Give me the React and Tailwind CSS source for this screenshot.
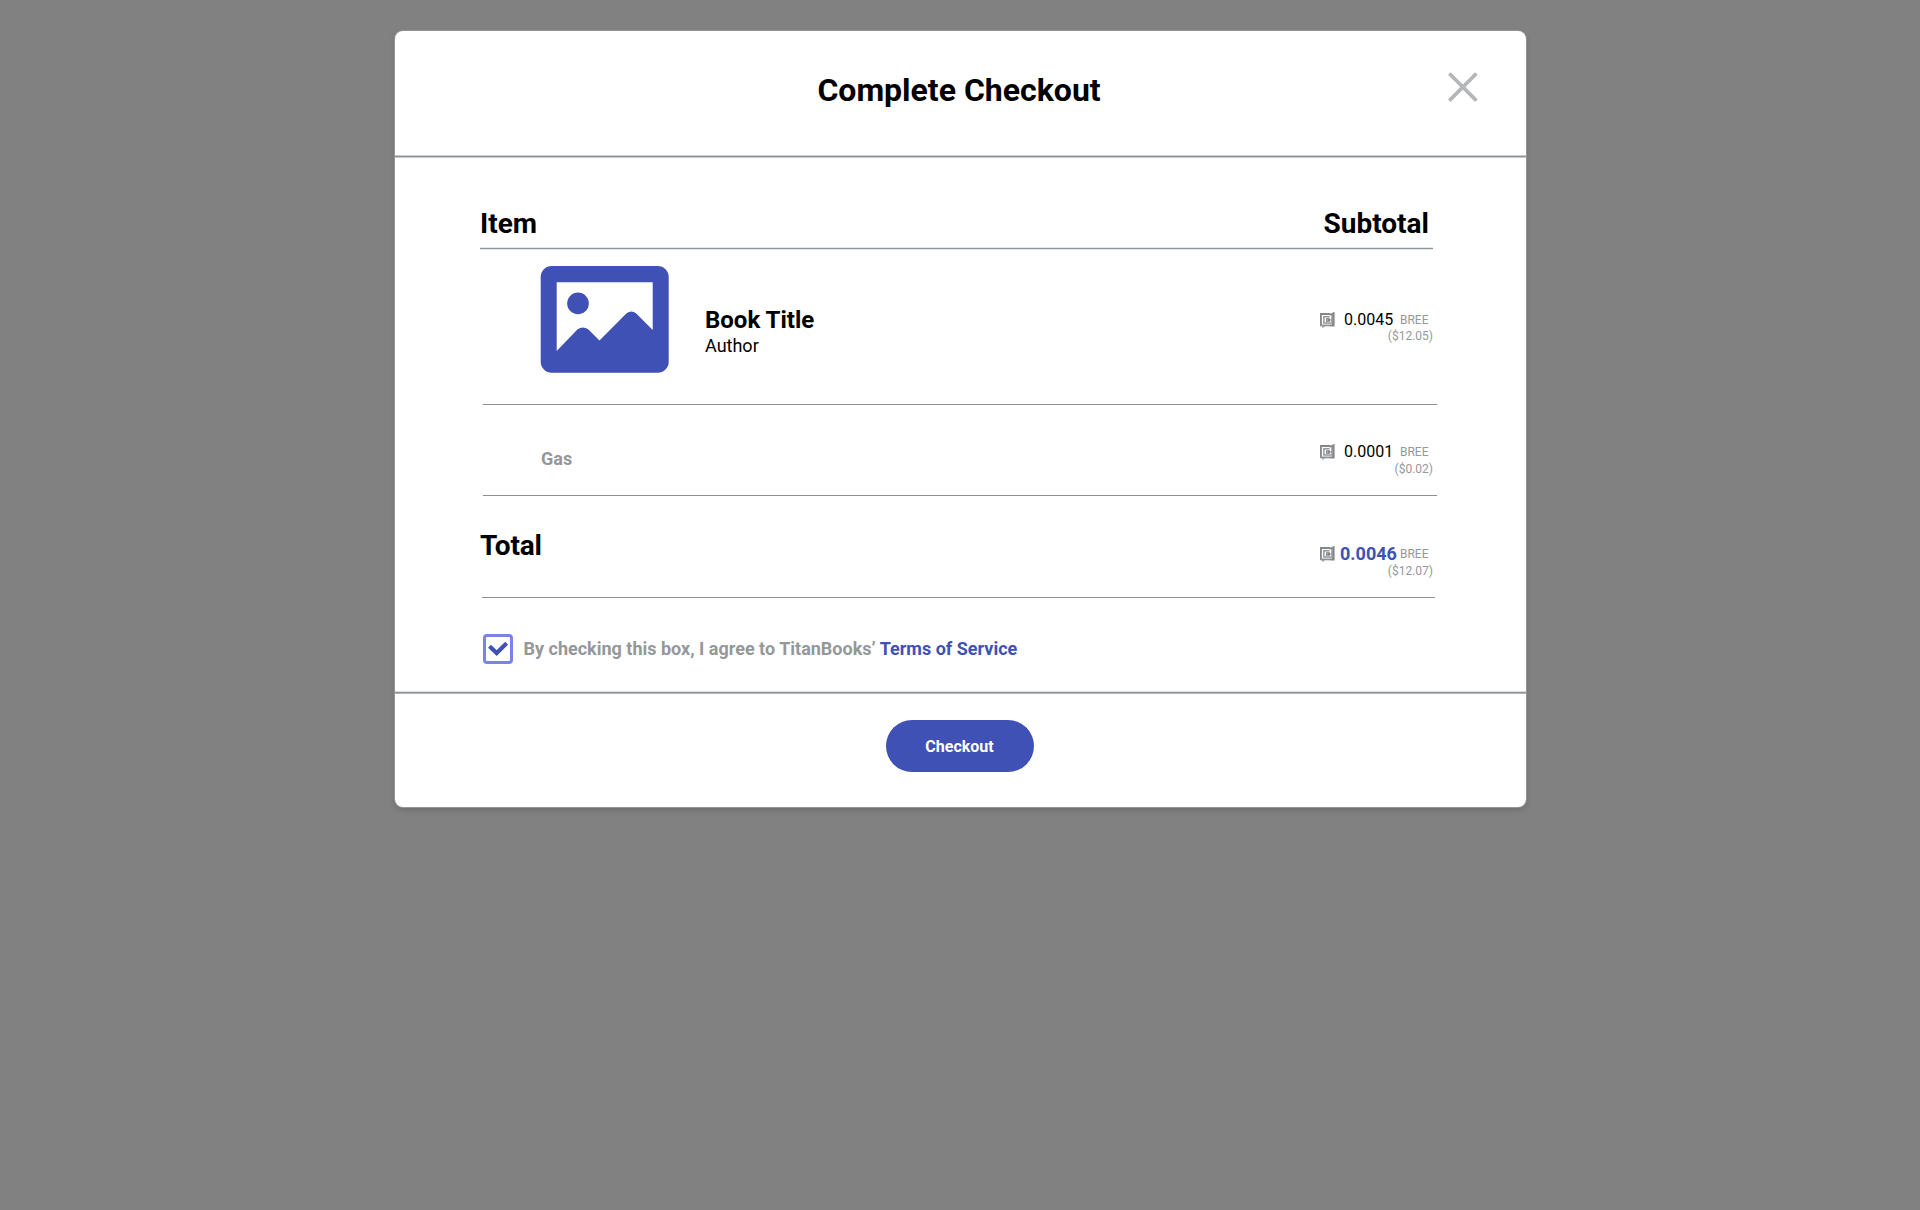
function CoinIcon() {
  return (
    <svg className="block h-[18px] w-[15px] shrink-0" viewBox="0 0 15 18" fill="none">
      <path d="M0.9 14.6V3H10.4" stroke="#84888b" strokeWidth="1.9" />
      <path d="M0 14.4H11" stroke="#8f9396" strokeWidth="1.8" />
      <path d="M9.8 3L14.6 0.8V15.4H10.6V13.4H12V4.4H9.8Z" fill="#84888b" />
      <path d="M9.6 5.7H3.9V12H11.8" stroke="#94989b" strokeWidth="1.5" />
      <path d="M11.8 4.5V12.4" stroke="#a3a7a9" strokeWidth="1.4" />
      <path d="M9.8 7.8H6.7V10.2H9.8M8.2 9H11.6" stroke="#787c7f" strokeWidth="1.2" />
      <path d="M2 14.6L2.4 17.2L5 15.2Z" fill="#a0a3a6" />
    </svg>
  );
}

function PictureIcon() {
  return (
    <svg className="block h-[107px] w-[129px] shrink-0" viewBox="0 0 129 107">
      <rect x="0.7" y="0.1" width="128" height="106.7" rx="11" fill="#4051b5" />
      <path
        d="M16.7 16.2H112.7V64L96 47.3Q91.3 43.5 86.6 47.3L59.5 74.6L48.2 63.3Q43 59.5 37.6 63.3L16.7 85Z"
        fill="#fff"
      />
      <circle cx="38" cy="37.4" r="10.8" fill="#4051b5" />
    </svg>
  );
}

function Price({ amount, usd, total = false, low = false }) {
  return (
    <div className="flex w-[113px] flex-col">
      <div className="flex h-5 items-center">
        <CoinIcon />
        <span
          className={
            total
              ? "ml-[5px] w-[60px] text-[18px] leading-5 font-bold text-[#4051b5]"
              : "ml-[9px] w-[56px] text-[16px] leading-5 text-black"
          }
        >
          {amount}
        </span>
        <span className="text-[12px] leading-5 text-[#95989a]">BREE</span>
      </div>
      <span
        className={
          low
            ? "-mt-px text-right text-[12px] leading-4 text-[#95989a]"
            : "-mt-[2px] text-right text-[12px] leading-4 text-[#95989a]"
        }
      >
        {usd}
      </span>
    </div>
  );
}

export default function App() {
  return (
    <div className="min-h-[1210px] bg-[#818181] pt-[31px] pl-[395px] font-['Roboto',sans-serif] text-black">
      <main className="flex h-[776px] w-[1131px] flex-col rounded-[8px] bg-white shadow-[0_0_0_1px_#959595,0_3px_6px_rgba(0,0,0,0.16)]">
        <header className="flex h-[124px] shrink-0 items-start">
          <h1 className="ml-[329px] w-[470px] pt-[39px] text-center text-[32px] leading-[40px] font-bold">
            Complete Checkout
          </h1>
          <button className="mt-[41px] ml-[254px]" aria-label="Close">
            <svg className="block size-[30px]" viewBox="0 0 30 30" stroke="#b4b6b8" strokeWidth="3.7">
              <path d="M1.3 1.5L28.4 28.6M28.4 1.5L1.3 28.6" />
            </svg>
          </button>
        </header>
        <div className="h-[3px] shrink-0 border-y border-[#c9cccf] bg-[#8e9194]" />

        <section className="h-[533px] shrink-0 pl-[85px]">
          <div className="flex h-[91px] w-[953px] items-start justify-between border-b border-[#8e9397] pt-[50px] pr-[4px] text-[28px] leading-8 font-bold shadow-[0_1px_0_#e6e9eb,inset_0_-1px_0_#e6e9eb]">
            <h2>Item</h2>
            <h2>Subtotal</h2>
          </div>
          <div className="ml-[3px] flex h-[156px] w-[954px] items-start border-b border-[#8e9194] pt-[17px] pl-[57px]">
            <PictureIcon />
            <div className="mt-[39px] ml-[36px] flex-1">
              <h3 className="text-[24px] leading-[30px] font-bold">Book Title</h3>
              <p className="-mt-[1px] text-[18px] leading-6">Author</p>
            </div>
            <div className="mt-[44px] mr-[4px]">
              <Price amount="0.0045" usd="($12.05)" />
            </div>
          </div>
          <div className="ml-[3px] flex h-[91px] w-[954px] items-start border-b border-[#8e9194] pt-[37px] pl-[58px]">
            <span className="mt-[5px] flex-1 text-[18px] leading-6 font-bold text-[#95989a]">Gas</span>
            <div className="mr-[4px]">
              <Price amount="0.0001" usd="($0.02)" low />
            </div>
          </div>
          <div className="flex h-[102px] w-[955px] items-start">
            <h2 className="mt-[34px] flex-1 text-[28px] leading-8 font-bold tracking-[-0.2px]">Total</h2>
            <div className="mt-[48px] mr-[2px]">
              <Price amount="0.0046" usd="($12.07)" total low />
            </div>
          </div>
          <div className="-mt-px ml-[2px] h-px w-[953px] bg-[#8e9194]" />
          <label className="mt-[36px] ml-[2.5px] flex h-[30px] items-center">
            <span className="flex size-[30px] items-center justify-center rounded-[4px] border-[3px] border-[#7a83eb]">
              <svg className="block h-[16px] w-[20px] shrink-0" viewBox="0 0 20 16" fill="none" stroke="#4051b5" strokeWidth="4.2">
                <path d="M1.5 5.2L8.7 12L18.7 2.2" />
              </svg>
            </span>
            <span className="ml-[11px] text-[18px] leading-6 font-bold text-[#95989a]">
              By checking this box, I agree to TitanBooks’ <a className="text-[#4051b5]">Terms of Service</a>
            </span>
          </label>
        </section>

        <div className="h-[3px] shrink-0 border-t border-b border-t-[#dce0e3] border-b-[#b2b6b9] bg-[#8e9397]" />
        <footer className="flex flex-1 items-start justify-center pt-[26px] pr-[2px]">
          <button className="h-[52px] w-[148px] rounded-full bg-[#4051b5] pt-px text-[16px] font-bold text-white">
            Checkout
          </button>
        </footer>
      </main>
    </div>
  );
}
